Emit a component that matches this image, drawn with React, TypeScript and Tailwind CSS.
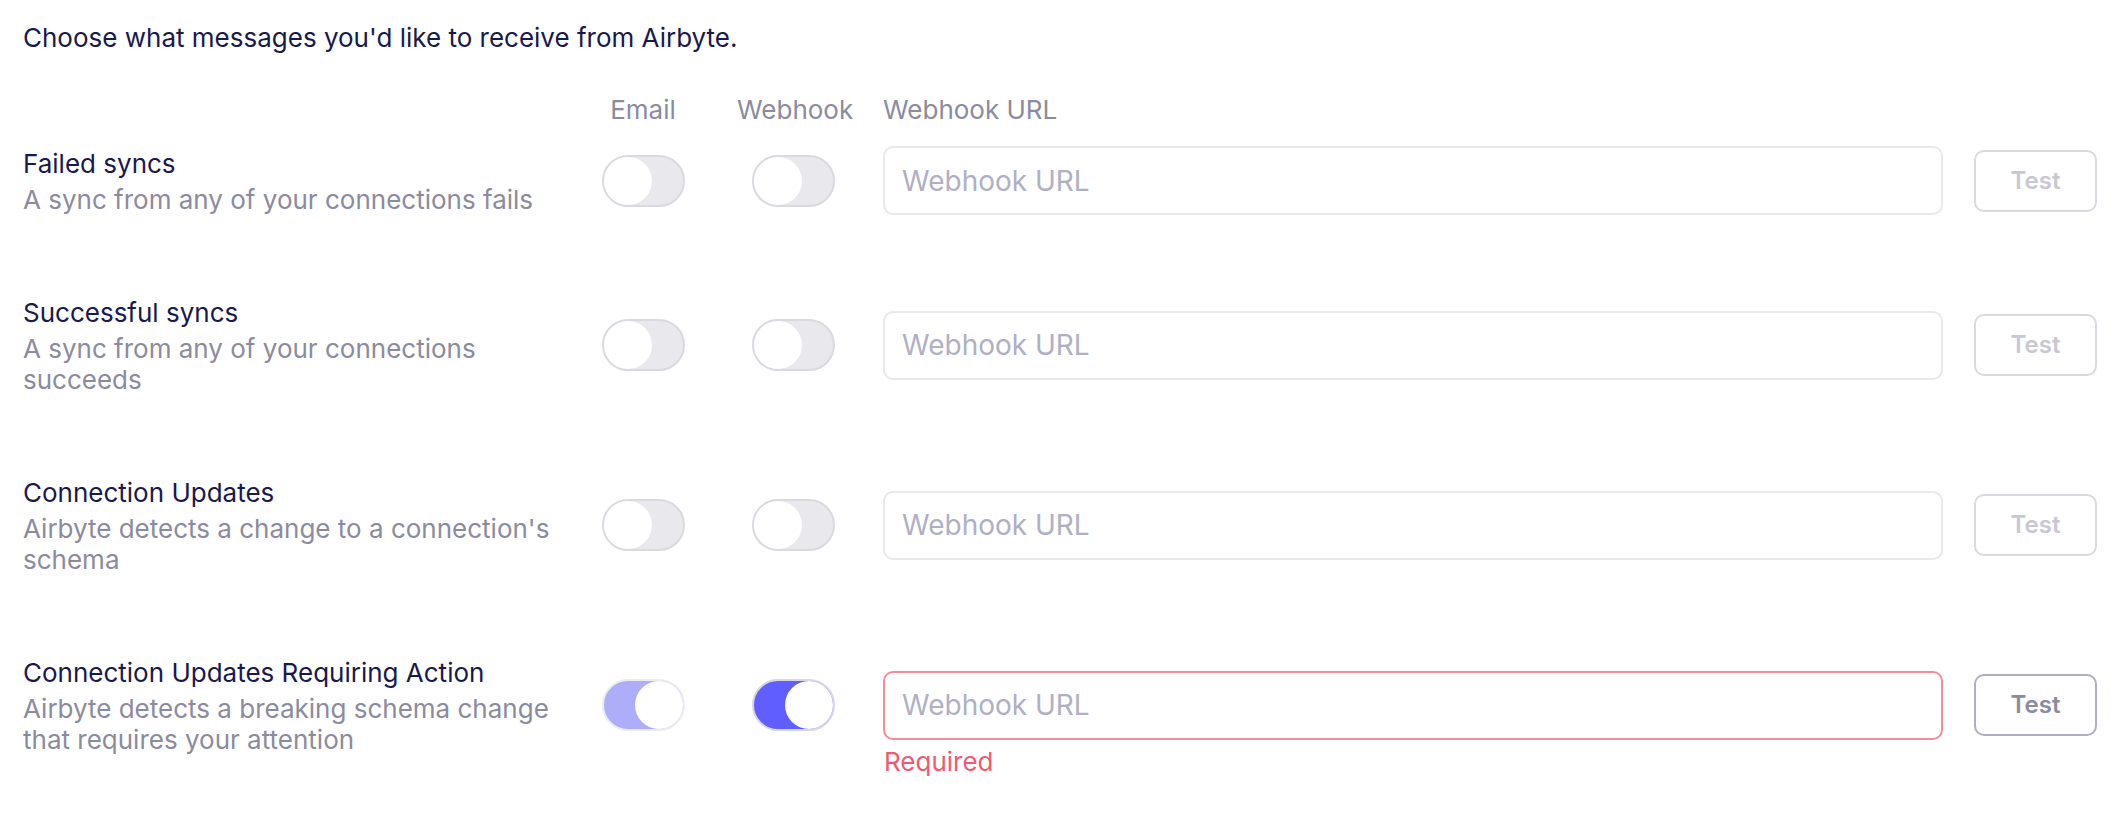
import React from "react";

type Row = {
  title: string;
  desc: string;
  email: "off" | "on-light" | "on";
  webhook: "off" | "on";
  error?: boolean;
};

const rows: Row[] = [
  { title: "Failed syncs", desc: "A sync from any of your connections fails", email: "off", webhook: "off" },
  { title: "Successful syncs", desc: "A sync from any of your connections succeeds", email: "off", webhook: "off" },
  { title: "Connection Updates", desc: "Airbyte detects a change to a connection's schema", email: "off", webhook: "off" },
  {
    title: "Connection Updates Requiring Action",
    desc: "Airbyte detects a breaking schema change that requires your attention",
    email: "on-light",
    webhook: "on",
    error: true,
  },
];

function Toggle({ state }: { state: "off" | "on-light" | "on" }) {
  if (state === "off") {
    return (
      <div className="flex h-[52px] w-[83px] items-center justify-start rounded-full border-2 border-[#d9d9e0] bg-[#e8e8ed]">
        <div className="h-[48px] w-[48px] rounded-full bg-white" />
      </div>
    );
  }
  if (state === "on-light") {
    return (
      <div className="flex h-[52px] w-[83px] items-center justify-end rounded-full border-2 border-[#ebebf0] bg-[#aeadfa]">
        <div className="h-[48px] w-[48px] rounded-full bg-white" />
      </div>
    );
  }
  return (
    <div className="flex h-[52px] w-[83px] items-center justify-end rounded-full border-2 border-[#d6d6e4] bg-[#615eff]">
      <div className="h-[48px] w-[48px] rounded-full bg-white" />
    </div>
  );
}

export default function App() {
  const cols = "grid grid-cols-[559px_122px_179px_1fr_154px]";
  return (
    <div
      className="min-h-[818px] w-full bg-white px-[23px] pt-[20px]"
      style={{ fontFamily: "Inter, 'Noto Sans', sans-serif" }}
    >
      <p className="text-[26px] leading-[36px] text-[#1a194d]">
        Choose what messages you'd like to receive from Airbyte.
      </p>

      <div className={`${cols} mt-[36px] mb-[18px] text-[26px] leading-[36px] text-[#8b8ba0]`}>
        <div />
        <div className="text-center">Email</div>
        <div className="pl-[33px] pr-[34px] text-center">Webhook</div>
        <div>Webhook URL</div>
        <div />
      </div>

      <div className="flex flex-col gap-y-[80px]">
        {rows.map((r) => (
          <div key={r.title} className={`${cols} items-center`}>
            <div className="flex flex-col pr-[19px]">
              <div className="text-[26px] leading-[36px] text-[#1a194d]">{r.title}</div>
              <div className="mt-[2px] text-[26px] leading-[31px] text-[#8b8ba0]">{r.desc}</div>
            </div>
            <div className="flex justify-center">
              <Toggle state={r.email} />
            </div>
            <div className="flex justify-center pl-[33px] pr-[34px]">
              <Toggle state={r.webhook} />
            </div>
            <div className="relative">
              <input
                placeholder="Webhook URL"
                className={`h-[69px] w-full rounded-[10px] border-2 bg-white px-[17px] text-[28px] text-[#1a194d] outline-none placeholder:text-[#b0b0c4] ${
                  r.error ? "border-[#f48c9c]" : "border-[#e8e8ed]"
                }`}
              />
              {r.error && (
                <div className="absolute left-[1px] top-[75px] text-[26px] leading-[32px] text-[#ef5a72]">
                  Required
                </div>
              )}
            </div>
            <div className="pl-[31px]">
              <button
                className={`h-[62px] w-[123px] rounded-[10px] border-2 bg-white text-[24px] font-semibold ${
                  r.error ? "border-[#afafc1] text-[#8b8ba0]" : "border-[#d9d9e0] text-[#c8c8d4]"
                }`}
              >
                Test
              </button>
            </div>
          </div>
        ))}
      </div>
    </div>
  );
}
